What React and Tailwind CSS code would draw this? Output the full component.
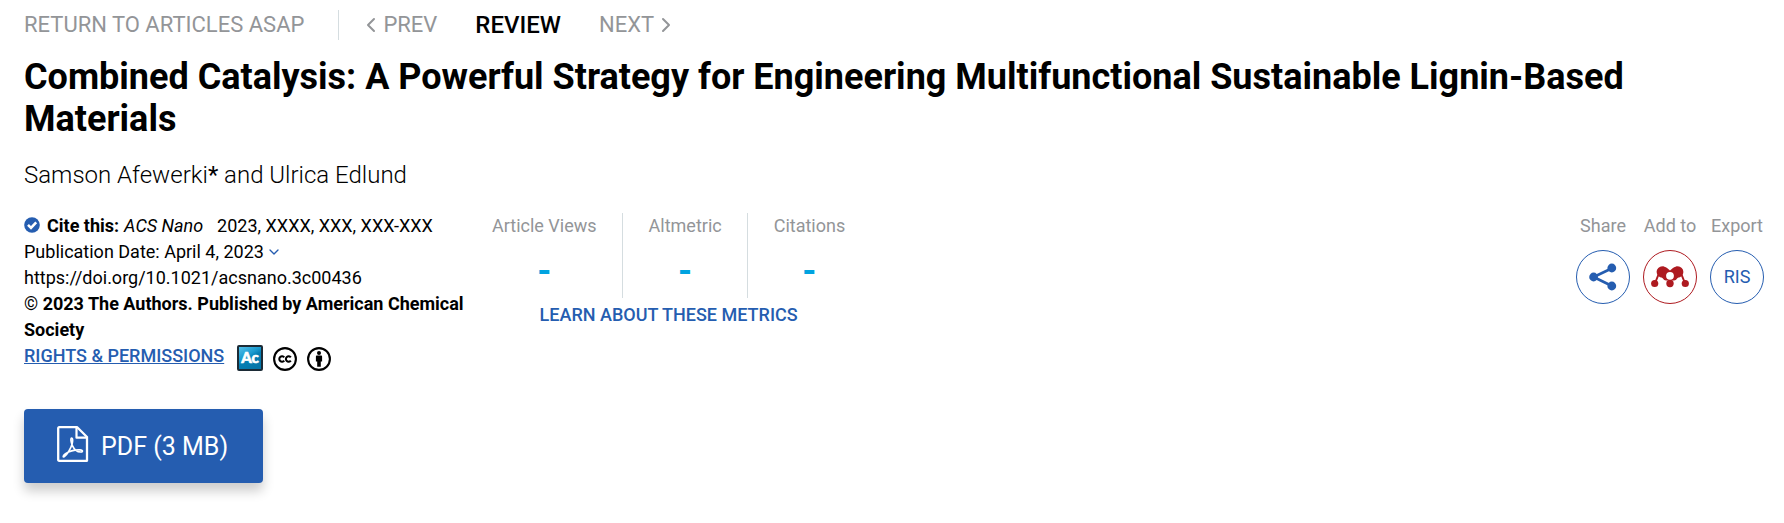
import { ChevronDown, ChevronLeft, ChevronRight } from 'lucide-react';

const metrics = ['Article Views', 'Altmetric', 'Citations'];

function CheckBadge() {
    return (
        <svg viewBox="0 0 16 16" className="mb-0.5 w-4 h-4 shrink-0" aria-hidden="true">
            <circle cx="8" cy="8" r="7.8" fill="#255db0" />
            <path d="M4 7.8l3 3 5.2-5.4" fill="none" stroke="#fff" strokeWidth="2.6" />
        </svg>
    );
}

function AuthorChoiceIcon() {
    return (
        <svg viewBox="0 0 26 26" className="ml-[3px] w-[26px] h-[26px]" role="img" aria-label="ACS AuthorChoice">
            <defs>
                <linearGradient id="ac-fill" x1="0" y1="0" x2="0.6" y2="1">
                    <stop offset="0" stopColor="#5cc4ec" />
                    <stop offset="0.45" stopColor="#1a9bd0" />
                    <stop offset="0.6" stopColor="#057fb4" />
                    <stop offset="1" stopColor="#0475a8" />
                </linearGradient>
            </defs>
            <rect x="1" y="1" width="24" height="24" rx="1" fill="url(#ac-fill)" stroke="#1c2b36" strokeWidth="2" />
            <text x="13" y="18" textAnchor="middle" fontFamily="Lato, sans-serif" fontWeight="900" fontSize="15" fill="#fff" stroke="#fff" strokeWidth="0.6">Ac</text>
        </svg>
    );
}

function CcIcon() {
    return (
        <svg viewBox="0 0 24 24" className="w-6 h-6" role="img" aria-label="Creative Commons">
            <circle cx="12" cy="12" r="10.9" fill="#fff" stroke="#000" strokeWidth="2.1" />
            <g fill="none" stroke="#000" strokeWidth="2.1">
                <path d="M11.2 10.4a2.7 2.7 0 1 0 0 3.2" />
                <path d="M17.8 10.4a2.7 2.7 0 1 0 0 3.2" />
            </g>
        </svg>
    );
}

function ByIcon() {
    return (
        <svg viewBox="0 0 24 24" className="w-6 h-6" role="img" aria-label="Attribution">
            <circle cx="12" cy="12" r="10.9" fill="#fff" stroke="#000" strokeWidth="2.1" />
            <circle cx="12" cy="6" r="2" />
            <path d="M9.7 8.6h4.6q.8 0 .8.8v5h-1.3v5.4h-3.6v-5.4H8.9v-5q0-.8.8-.8z" />
        </svg>
    );
}

function ShareIcon() {
    return (
        <svg viewBox="0 0 28 28" className="w-7 h-7" aria-hidden="true">
            <path d="M23 5.2L4.6 14 23 23" fill="none" stroke="#255db0" strokeWidth="2.7" />
            <g fill="#255db0">
                <circle cx="22.8" cy="5" r="4.4" />
                <circle cx="4.6" cy="14" r="4.4" />
                <circle cx="22.8" cy="23" r="4.4" />
            </g>
        </svg>
    );
}

function MendeleyIcon() {
    return (
        <svg viewBox="0 0 38 22" className="w-[38px] h-[22px]" aria-hidden="true">
            <g fill="#ae1a20">
                <circle cx="11.3" cy="6" r="5.7" />
                <circle cx="26.7" cy="6" r="5.7" />
                <path d="M12 .4q4 .6 7 4.2 3-3.600 7-4.200l1 11q-1.500 2.500-4 3h-8q-2.500-.5-4-3z" />
                <circle cx="3.7" cy="17.5" r="3.6" />
                <circle cx="19" cy="17.5" r="3.7" />
                <circle cx="34.3" cy="17.5" r="3.6" />
            </g>
            <path d="M7.5 8.5L4.5 16M30.500 8.500l3 7.500" stroke="#ae1a20" strokeWidth="2" />
            <circle cx="19" cy="9.800" r="3.900" fill="#fff" />
        </svg>
    );
}

function PdfIcon() {
    return (
        <svg viewBox="0 0 32 36" className="mb-1 w-8 h-9" fill="none" stroke="#fff" strokeLinejoin="round" aria-hidden="true">
            <path d="M2.2 1.2h18l9.800 9.800v23.800H2.200q-1 0-1-1V2.200q0-1 1-1z" strokeWidth="2.3" />
            <path d="M19.500 1.500v10.200H30" strokeWidth="2.2" />
            <path d="M14.800 12c-1.600 0-.8 4.600.6 7.600 2 4.200 5.600 6.600 8.600 6.400 2.400-.2 1.800-2-1-2.100-5-.2-11 1.500-14.500 3.800-2.800 2-2.800 4-1.300 3 2.700-1.600 6.600-8 7.900-12.700.8-3.200.8-6-.3-6z" strokeWidth="1.6" />
        </svg>
    );
}

function ActionButton({ label, className, children }) {
    return (
        <div className="flex w-[54px] flex-col items-center gap-[11px]">
            <span className="whitespace-nowrap text-[#939598]">{label}</span>
            <button type="button" aria-label={label} className={`flex h-[54px] w-[54px] items-center justify-center rounded-full border ${className}`}>
                {children}
            </button>
        </div>
    );
}

function App() {
    return (
        <main className="bg-white px-6 pt-2.5 pb-10 font-[Roboto,sans-serif] text-lg leading-[26px] text-black">
            <nav className="flex items-center text-[22px] leading-[30px] text-[#939598]">
                <a href="#asap" className="border-r border-[#d5dde0] pr-[34px]">RETURN TO ARTICLES ASAP</a>
                <a href="#prev" className="ml-5 flex items-center">
                    <ChevronLeft className="h-6 w-6" strokeWidth={2} />
                    PREV
                </a>
                <span className="ml-[38px] text-2xl leading-[30px] font-medium text-black">REVIEW</span>
                <a href="#next" className="ml-[38px] flex items-center">
                    NEXT
                    <ChevronRight className="h-6 w-6" strokeWidth={2} />
                </a>
            </nav>

            <h1 className="mt-4 pr-20 text-4xl leading-[42px] font-bold">
                Combined Catalysis: A Powerful Strategy for Engineering Multifunctional Sustainable Lignin-Based Materials
            </h1>

            <p className="mt-[17px] text-2xl leading-9 font-light">
                Samson Afewerki<span className="font-normal">*</span> and Ulrica Edlund
            </p>

            <div className="mt-5 flex items-start">
                <section className="w-[448px]">
                    <div className="flex items-center">
                        <CheckBadge />
                        <b className="ml-[7px] font-bold">Cite this:</b>
                        <i className="ml-[5px]">ACS Nano</i>
                        <span className="ml-3.5">2023, XXXX, XXX, XXX-XXX</span>
                    </div>
                    <button type="button" className="flex items-center">
                        Publication Date: April 4, 2023
                        <ChevronDown className="ml-0.5 h-4 w-4 text-[#255db0]" />
                    </button>
                    <a href="https://doi.org/10.1021/acsnano.3c00436" className="block">https://doi.org/10.1021/acsnano.3c00436</a>
                    <p className="font-bold">
                        <span className="font-normal">©</span> 2023 The Authors. Published by American Chemical Society
                    </p>
                    <div className="flex h-7 items-end gap-2.5">
                        <a href="#rights" className="self-start font-medium text-[#255db0] underline">RIGHTS &amp; PERMISSIONS</a>
                        <AuthorChoiceIcon />
                        <CcIcon />
                        <ByIcon />
                    </div>
                </section>

                <section className="ml-5 flex flex-col items-center">
                    <dl className="flex divide-x divide-[#d5dde0]">
                        {metrics.map((name) => (
                            <div key={name} className="flex h-[85px] flex-col items-center gap-3.5 pr-[25px] pl-[26px] first:pl-0 last:pr-0">
                                <dt className="text-[#939598]">{name}</dt>
                                <dd className="text-4xl leading-9 font-bold text-[#00a3e0]">-</dd>
                            </div>
                        ))}
                    </dl>
                    <a href="#metrics" className="mt-1 font-medium text-[#255db0]">LEARN ABOUT THESE METRICS</a>
                </section>

                <section className="-mr-1 ml-auto flex gap-[13px]">
                    <ActionButton label="Share" className="border-[#255db0]">
                        <ShareIcon />
                    </ActionButton>
                    <ActionButton label="Add to" className="border-[#ae1a20]">
                        <MendeleyIcon />
                    </ActionButton>
                    <ActionButton label="Export" className="border-[#255db0] text-[#255db0]">
                        RIS
                    </ActionButton>
                </section>
            </div>

            <a href="#pdf" className="mt-[38px] inline-flex h-[74px] items-center gap-3 rounded bg-[#255db0] pr-[35px] pl-[33px] text-[25px] leading-8 text-white shadow-[0_8px_12px_rgba(0,0,0,0.2)]">
                <PdfIcon />
                <span className="pt-0.5">PDF (3 MB)</span>
            </a>
        </main>
    );
}

export default App;
